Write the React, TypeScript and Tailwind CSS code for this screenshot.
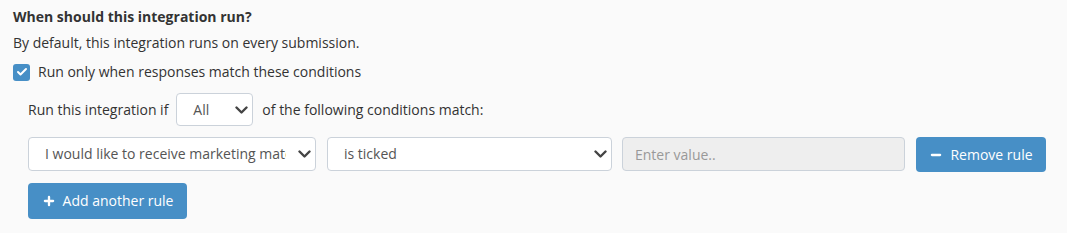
import { Check, Minus, Plus } from "lucide-react";

function Chevron() {
  return (
    <svg
      width="13"
      height="8"
      viewBox="0 0 13 8"
      className="pointer-events-none absolute right-[5px] top-1/2 -translate-y-1/2 text-[#444]"
    >
      <path d="M1.5 1.5 L6.5 6.5 L11.5 1.5" fill="none" stroke="currentColor" strokeWidth="2.4" strokeLinecap="round" strokeLinejoin="round" />
    </svg>
  );
}

function Select({ value, width }: { value: string; width: string }) {
  return (
    <div className={`relative h-[34px] ${width}`}>
      <div className="flex h-full items-center rounded-[4px] border border-[#cbd2da] bg-white pl-[16px] pr-[29px] text-[#555]">
        <span className="block overflow-hidden whitespace-nowrap">{value}</span>
      </div>
      <Chevron />
    </div>
  );
}

export default function App() {
  return (
    <div
      className="h-[233px] w-full bg-[#fafafa] px-[13px] pt-[7px] text-[14px] leading-[20px] text-[#333]"
      style={{ fontFamily: '"Open Sans", "Liberation Sans", sans-serif' }}
    >
      <h3 className="font-bold">When should this integration run?</h3>
      <p className="mt-[6px]">By default, this integration runs on every submission.</p>

      <label className="mt-[9px] flex h-[20px] items-center gap-[8px]">
        <span className="flex h-[17px] w-[17px] items-center justify-center rounded-[3px] bg-[#478fc6]">
          <Check className="h-[12px] w-[12px] text-white" strokeWidth={4} />
        </span>
        <span>Run only when responses match these conditions</span>
      </label>

      <div className="pl-[15px]">
        <div className="mt-[11px] flex h-[33px] items-center">
          <span>Run this integration if</span>
          <div className="relative ml-[8px] h-[33px] w-[77px]">
            <div className="flex h-full items-center rounded-[4px] border border-[#cbd2da] bg-white pl-[16px] text-[#555]">
              All
            </div>
            <Chevron />
          </div>
          <span className="ml-[9px]">of the following conditions match:</span>
        </div>

        <div className="mt-[11px] flex items-start">
          <Select value="I would like to receive marketing materials" width="w-[288px]" />
          <div className="ml-[11px]">
            <Select value="is ticked" width="w-[285px]" />
          </div>
          <input
            disabled
            placeholder="Enter value.."
            className="ml-[10px] h-[34px] w-[283px] rounded-[4px] border border-[#cbd2da] bg-[#eee] px-[12px] text-[14px] placeholder:text-[#999]"
          />
          <button className="ml-[11px] flex h-[35px] w-[130px] items-center justify-center gap-[7px] rounded-[4px] bg-[#478fc6] text-white">
            <Minus className="h-[14px] w-[14px]" strokeWidth={4} />
            Remove rule
          </button>
        </div>

        <button className="mt-[11px] flex h-[36px] w-[159px] items-center justify-center gap-[7px] rounded-[4px] bg-[#478fc6] text-white">
          <Plus className="h-[14px] w-[14px]" strokeWidth={4} />
          Add another rule
        </button>
      </div>
    </div>
  );
}
